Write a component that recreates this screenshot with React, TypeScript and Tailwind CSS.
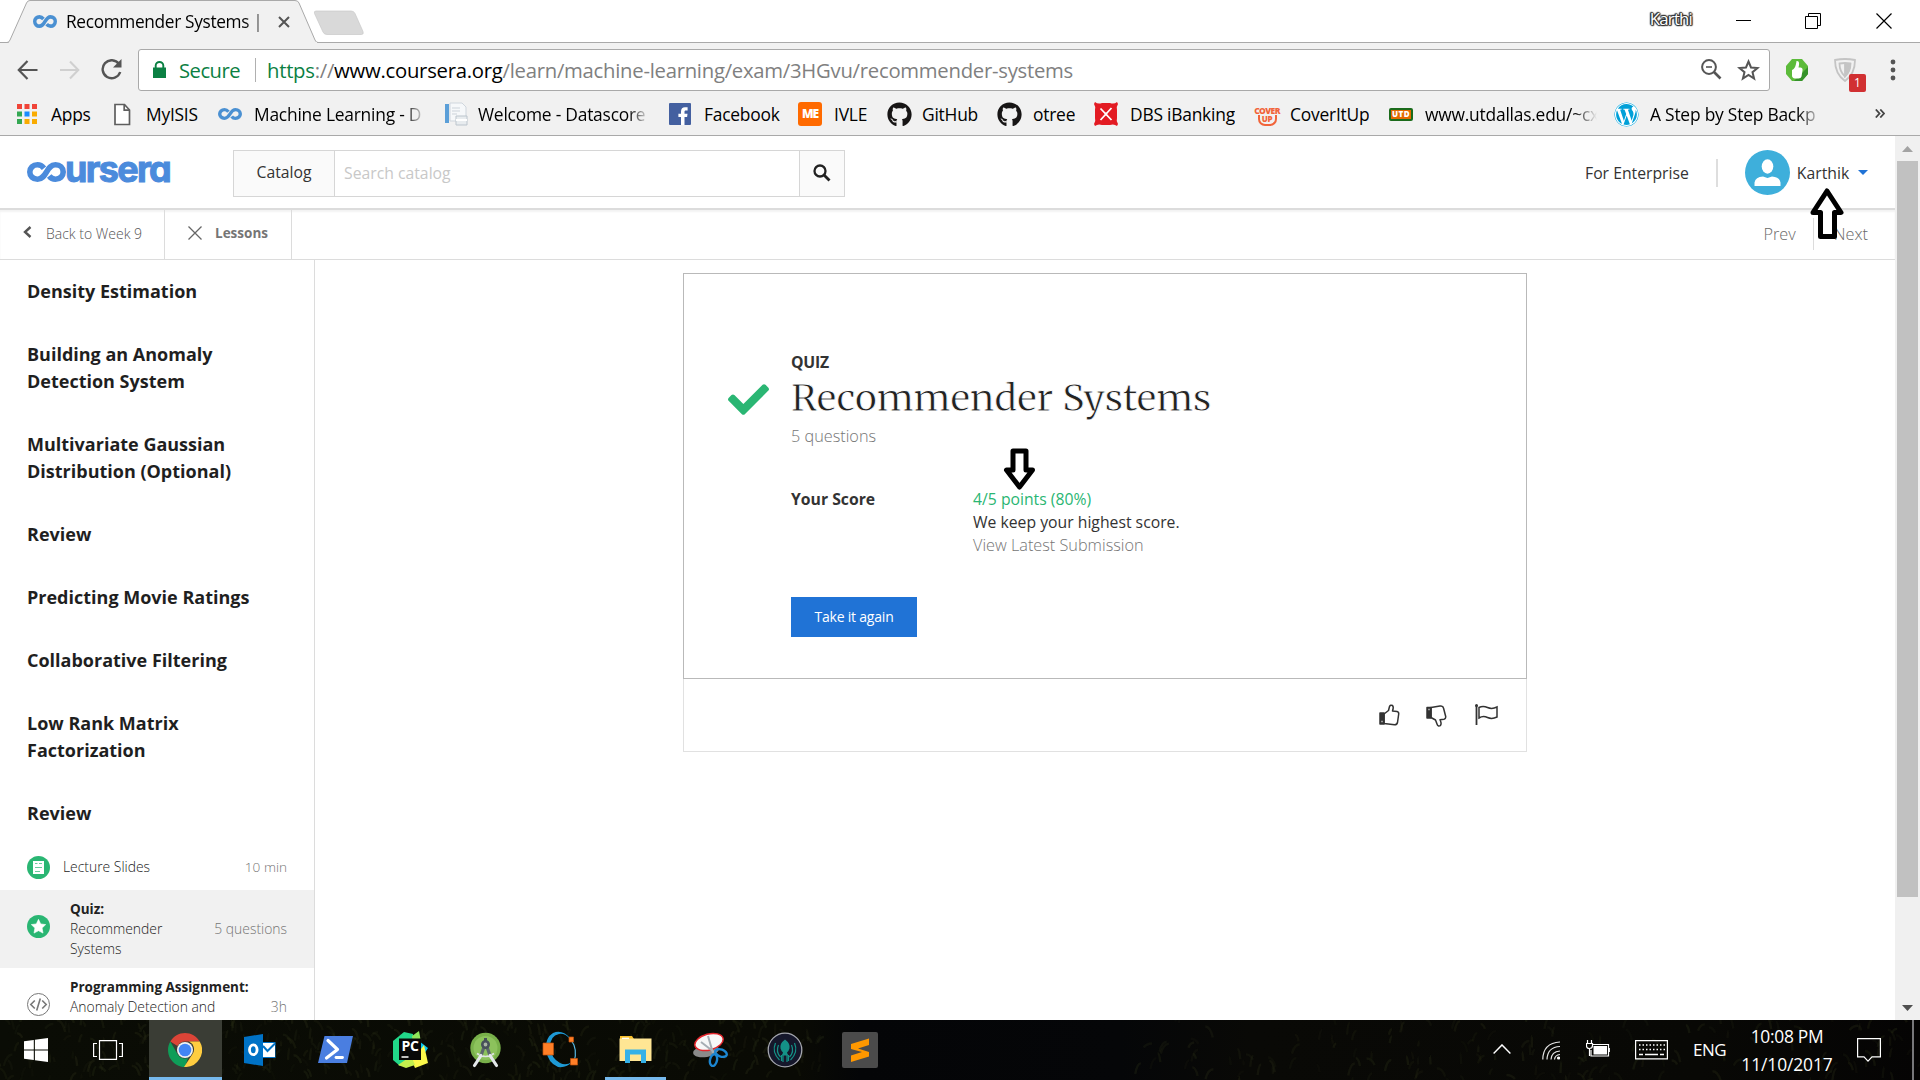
import type { ReactNode } from "react";
import { FaCheck, FaGithub, FaWordpress } from "react-icons/fa";

/* ---------- shared drawings ---------- */

function Infinity({ className, color }: { className: string; color: string }) {
  return (
    <svg className={className} viewBox="0 0 39 20" preserveAspectRatio="none" fill="none" stroke={color} strokeWidth="5.6">
      <path d="M17 6.2C15 3.8 12.8 2.8 10.5 2.8C6 2.8 2.8 6 2.8 10S6 17.2 10.5 17.2C20 17.2 19 2.8 28.5 2.8C33 2.8 36.2 6 36.2 10S33 17.2 28.5 17.2C26 17.2 24 16.4 22.2 14" />
    </svg>
  );
}

function AppsIcon() {
  const colors = ["#f04438", "#f04438", "#f04438", "#34a853", "#1a8cff", "#f9ab00", "#34a853", "#f9ab00", "#f9ab00"];
  return (
    <svg width="21" height="21" viewBox="0 0 21 21">
      {colors.map((c, i) => (
        <rect key={i} x={(i % 3) * 7.5} y={Math.floor(i / 3) * 7.5} width="5" height="5" fill={c} />
      ))}
    </svg>
  );
}

function PageIcon() {
  return (
    <svg width="17" height="23" viewBox="0 0 17 23" fill="#fff" stroke="#5f5f5f" strokeWidth="1.7">
      <path d="M1 1.5h9.5l5 5.5v14.5H1z" />
      <path d="M10.2 1.5v5.7h5.3" fill="none" />
    </svg>
  );
}

function DocsIcon() {
  return (
    <svg width="24" height="24" viewBox="0 0 24 24">
      <path d="M1 2h4v19H1z" fill="#5b9fd8" />
      <path d="M6 1h12l4 4v14H6z" fill="#f6f8fa" stroke="#cfd6dd" />
      <path d="M8 6h8M8 9h8M8 12h5" stroke="#ccd3da" />
      <path d="M12 14h11v9H12z" fill="#e8ecef" stroke="#bcc5cd" />
      <path d="M12 18h11" stroke="#fff" strokeWidth="2" />
    </svg>
  );
}

function FacebookIcon() {
  return (
    <svg width="22" height="22" viewBox="0 0 22 22">
      <rect width="22" height="22" rx="1" fill="#4460a0" />
      <path d="M12 22v-8H9.4v-3.2H12V8.5c0-2.8 1.5-4.3 4-4.3h2.6v3.2h-1.7c-1.1 0-1.4.5-1.4 1.500v1.900h3l-.4 3.200h-2.600v8z" fill="#fff" />
    </svg>
  );
}

function MeIcon() {
  return (
    <span className="flex h-6 w-6 items-center justify-center rounded-[3px] bg-[#ff6a00] text-[12px] font-extrabold tracking-[-1px] text-white">ME</span>
  );
}

function DbsIcon() {
  return (
    <svg width="24" height="24" viewBox="0 0 24 24">
      <path d="M1 0Q4 2.500 8 1h8q4 1.500 7-1l1 2q-2 3-1 6v8q-1 3 1 6l-1 2q-3-2.500-7-1H8q-4-1.500-7 1l-1-2q2-3 1-6V8Q2 5 0 2z" fill="#e31b23" />
      <path d="M6.500 6.500 17.500 18M17.500 6 6.500 18" stroke="#fff" strokeWidth="1.800" />
      <path d="m10.500 12 1.500-2 1.500 2-1.500 2z" fill="#fff" />
    </svg>
  );
}

function CoverIcon() {
  return (
    <span className="flex h-6 w-6 flex-col items-center justify-end text-[#f1643a]">
      <span className="text-[8.500px] leading-[9px] font-black tracking-[-0.600px]">COVER</span>
      <span className="flex h-[11px] w-[19px] items-start justify-center rounded-b-[7px] border-2 border-t-0 border-[#f1643a] text-[8px] leading-[8px] font-black tracking-[-0.300px]">UP</span>
    </span>
  );
}

function UtdIcon() {
  return (
    <span className="flex h-[13px] w-6 items-center justify-center rounded-[2px] border-2 border-[#1b6b1b] bg-[#e36a00] text-[8px] leading-none font-extrabold tracking-[0.500px] text-white">UTD</span>
  );
}

/* ---------- browser chrome ---------- */

function WindowBar() {
  return (
    <div className="relative flex h-[43px] items-start border-b border-[#a9a9a9] bg-white">
      <svg className="absolute top-0 left-0" width="380" height="43" viewBox="0 0 380 43">
        <path d="M0 42.500H7Q9 42.500 10 40L26.500 3Q27.500.5 30 .5H295Q298 .5 299 3L315 40Q316 42.500 318 42.500" fill="#f1f1f1" stroke="#a9a9a9" />
        <path d="M9 43h308" stroke="#f1f1f1" strokeWidth="2" />
        <path d="M316 11h35q3 0 4 2.500l8 18q1 3-1.500 3H327q-3 0-4-2.500l-8.500-18.500q-.8-2.500 1.500-2.500z" fill="#d9d9d9" stroke="#c9c9c9" strokeWidth=".7" />
      </svg>
      <div className="relative flex h-[43px] w-[318px] items-center pl-[33px]">
        <Infinity className="h-[13px] w-6" color="#4a90d2" />
        <span className="ml-[9px] w-[201px] overflow-hidden text-[17.300px] tracking-[-0.340px] whitespace-nowrap text-black [mask-image:linear-gradient(to_right,#000_88%,#0007)]">Recommender Systems |</span>
        <svg className="ml-[11px]" width="12" height="12" viewBox="0 0 12 12" stroke="#555" strokeWidth="2"><path d="m1 1 10 10M11 1 1 11" /></svg>
      </div>
      <div className="ml-auto flex h-[41px] items-center pr-[28px]">
        <span className="mr-[44px] mb-[3px] text-[16.800px] leading-none tracking-[-0.800px] text-white [text-shadow:0_0_1px_#333,0_0_2px_#333,1px_0_1px_#333,-1px_0_1px_#333,0_1px_1px_#333,0_-1px_1px_#333,1px_1px_1px_#444,-1px_-1px_1px_#444]">Karthi</span>
        <svg className="mr-[54px]" width="15" height="16" viewBox="0 0 15 16"><path d="M0 7.500h15" stroke="#000" /></svg>
        <svg className="mr-[55px]" width="16" height="16" viewBox="0 0 16 16" fill="none" stroke="#000"><path d="M.5 3.500h12v12H.5zM3.500 3.500V.5h12v12h-3" /></svg>
        <svg width="16" height="16" viewBox="0 0 16 16" stroke="#000" strokeWidth="1.200"><path d="m.5.5 15 15M15.500.5l-15 15" /></svg>
      </div>
    </div>
  );
}

function Toolbar() {
  return (
    <div className="flex h-[53px] items-center pl-[17px]">
      <svg width="21" height="20" viewBox="0 0 21 20" fill="none" stroke="#555" strokeWidth="2.200"><path d="M20.500 10H2M10.500 1 1.800 10l8.700 9" /></svg>
      <svg className="ml-[22px]" width="20" height="20" viewBox="0 0 21 20" fill="none" stroke="#d0d0d0" strokeWidth="2.200"><path d="M0 10h19M10.500 1l8.700 9-8.700 9" /></svg>
      <svg className="ml-[21px]" width="21" height="21" viewBox="0 0 21 21" fill="none" stroke="#555" strokeWidth="2.400"><path d="M18 5A9 9 0 1 0 19.200 13" /><path d="M20.500 0v8.500H12z" fill="#555" stroke="none" /></svg>
      <div className="ml-4 flex h-[42px] w-[1632px] items-center rounded-[3px] border border-[#a9a9a9] bg-white pr-[9px] pl-[14px]">
        <svg width="13" height="17" viewBox="0 0 13 17"><path d="M0 6.500h13V17H0z" fill="#0b8043" /><path d="M2.700 7V4.500a3.800 3.500 0 0 1 7.600 0V7" fill="none" stroke="#0b8043" strokeWidth="1.900" /></svg>
        <span className="mt-px ml-[13px] w-[62px] text-[20.200px] tracking-[-0.500px] text-[#0b8043]">Secure</span>
        <span className="ml-[14px] h-6 w-px bg-[#b0b0b0]" />
        <span className="mt-px ml-[11px] text-[20.300px] tracking-[-0.260px] whitespace-nowrap text-[#808080]">
          <span className="text-[#0b8043]">https</span>://<span className="text-black">www.coursera.org</span>/learn/machine-learning/exam/3HGvu/recommender-systems
        </span>
        <svg className="ml-auto" width="21" height="21" viewBox="0 0 21 21" fill="none" stroke="#555"><circle cx="8" cy="8" r="6.900" strokeWidth="2" /><path d="M5 8h6" strokeWidth="1.600" /><path d="m13 13 6.500 6.500" strokeWidth="2.600" /></svg>
        <svg className="ml-[15px]" width="23" height="22" viewBox="0 0 23 22" fill="none" stroke="#555" strokeWidth="2"><path d="m11.500 2.500 2.500 6 6.500.5-5 4.200 1.600 6.300-5.600-3.500-5.600 3.500 1.600-6.300-5-4.200 6.500-.5z" /></svg>
      </div>
      <svg className="ml-[15px]" width="24" height="24" viewBox="0 0 24 24"><path d="M7 1h10l6 7v8l-6 7H7l-6-7V8z" fill="#5cbb3a" /><path d="m23 9v7l-6 7H9z" fill="#35922a" /><path d="M7 12c3-1 4-5 4.500-9 3-.5 3 3 2 6.500 3 0 4.500.5 4 3l-1 6q-.5 2-3 2H10q-3-.5-3-3z" fill="#fff" /></svg>
      <div className="relative ml-[25px] h-6 w-[24px]">
        <svg width="22" height="24" viewBox="0 0 22 24" fill="none" stroke="#c4c4c4" strokeWidth="1.800"><path d="M1 2q10-2 20 0 0 14-10 21Q1 16 1 2z" /><path d="M5.500 5.500q5.500-1 11 0 0 8-5.500 13-5.500-5-5.500-13z" /><path d="M11 6v12q5-5 5-12z" fill="#c4c4c4" /></svg>
        <span className="absolute top-[16px] left-[15px] flex h-[18px] w-[17px] items-center justify-center rounded-[2px] bg-[#d13032] pt-px text-[12px] text-white">1</span>
      </div>
      <svg className="ml-[32px]" width="6" height="22" viewBox="0 0 6 22" fill="#555"><circle cx="3" cy="3" r="2.400" /><circle cx="3" cy="11" r="2.400" /><circle cx="3" cy="19" r="2.400" /></svg>
    </div>
  );
}

const bookmarks: { cell: string; slot: string; label: string; text: string; icon: ReactNode }[] = [
  { cell: "w-[97px]", slot: "w-[34px]", label: "", text: "Apps", icon: <AppsIcon /> },
  { cell: "w-[105px]", slot: "w-[32px]", label: "", text: "MyISIS", icon: <PageIcon /> },
  { cell: "w-[225px]", slot: "w-[35px]", label: "w-[171px] [mask-image:linear-gradient(to_right,#000_88%,#0000)]", text: "Machine Learning - D", icon: <Infinity className="-ml-px h-[12px] w-6" color="#4a90d2" /> },
  { cell: "w-[225px]", slot: "w-[34px]", label: "w-[171px] [mask-image:linear-gradient(to_right,#000_88%,#0000)]", text: "Welcome - Datascore", icon: <DocsIcon /> },
  { cell: "w-[129px]", slot: "w-[35px]", label: "", text: "Facebook", icon: <FacebookIcon /> },
  { cell: "w-[89px]", slot: "w-[36px]", label: "", text: "IVLE", icon: <MeIcon /> },
  { cell: "w-[110px]", slot: "w-[35px]", label: "", text: "GitHub", icon: <FaGithub size={25} color="#171515" /> },
  { cell: "w-[97px]", slot: "w-[36px]", label: "", text: "otree", icon: <FaGithub size={25} color="#171515" /> },
  { cell: "w-[161px]", slot: "w-[36px]", label: "", text: "DBS iBanking", icon: <DbsIcon /> },
  { cell: "w-[134px]", slot: "w-[35px]", label: "", text: "CoverItUp", icon: <CoverIcon /> },
  { cell: "w-[225px]", slot: "w-[36px]", label: "w-[172px] [mask-image:linear-gradient(to_right,#000_86%,#0000)]", text: "www.utdallas.edu/~cx", icon: <UtdIcon /> },
  { cell: "w-[261px]", slot: "w-[36px]", label: "w-[172px] [mask-image:linear-gradient(to_right,#000_86%,#0000)]", text: "A Step by Step Backp", icon: <FaWordpress size={25} color="#00a0d8" className="rounded-full bg-white" /> },
];

function Bookmarks() {
  return (
    <div className="flex h-[40px] items-start border-b border-[#a9a9a9] pl-[17px]">
      {bookmarks.map((b, i) => (
        <div key={i} className={"flex h-[36px] shrink-0 items-center " + b.cell}>
          <span className={"flex shrink-0 " + b.slot}>{b.icon}</span>
          <span className={"overflow-hidden text-[17.400px] tracking-[-0.220px] whitespace-nowrap text-black " + b.label}>{b.text}</span>
        </div>
      ))}
      <svg className="mt-[13px]" width="10" height="9" viewBox="0 0 10 9" fill="none" stroke="#444" strokeWidth="1.800"><path d="m.8.5 3.700 4-3.700 4M5.300.5 9 4.500l-3.700 4" /></svg>
    </div>
  );
}

/* ---------- page ---------- */

function SiteHeader() {
  return (
    <header className="flex h-[74px] shrink-0 items-center border-b-2 border-[#dcdcdc] bg-white pl-[27px] text-[15.750px] text-[#333]">
      <div className="mt-[-1px] flex w-[206px] items-center">
        <Infinity className="h-[20px] w-[39px] shrink-0" color="#4b8bdc" />
        <span className="mt-[-6px] -ml-px font-['Inter'] text-[36px] leading-[20px] font-bold tracking-[-1.700px] text-[#4b8bdc] [-webkit-text-stroke:1px_#4b8bdc] [font-feature-settings:'cv11']">ursera</span>
      </div>
      <div className="mt-[2px] flex h-[47px] w-[612px] border border-[#d6d6d6]">
        <span className="flex w-[101px] items-center justify-center border-r border-[#d6d6d6] bg-[#fafafa]">Catalog</span>
        <span className="flex flex-1 items-center pt-[2px] pl-[9px] text-[#c8c8c8]">Search catalog</span>
        <span className="flex w-[45px] items-center justify-center border-l border-[#d6d6d6] bg-[#fafafa]">
          <svg width="18" height="18" viewBox="0 0 18 18" fill="none" stroke="#222"><circle cx="7" cy="7" r="5.500" strokeWidth="2.300" /><path d="m11 11 5.500 5.500" strokeWidth="2.800" /></svg>
        </span>
      </div>
      <span className="mt-[3px] ml-[740px]">For Enterprise</span>
      <span className="mt-px ml-[27px] h-7 w-[2px] bg-[#dedede]" />
      <svg className="ml-[27px]" width="45" height="45" viewBox="0 0 45 45">
        <circle cx="22.500" cy="22.500" r="22.500" fill="#3eafdb" />
        <ellipse cx="22.500" cy="16.500" rx="5.800" ry="7.200" fill="#fff" />
        <path d="M9.500 36v-3.500Q10.500 27 18 26.500l4.500 1.500 4.500-1.500q7.500.5 8.500 6V36z" fill="#fff" />
      </svg>
      <span className="mt-[3px] ml-[7px]">Karthik</span>
      <svg className="ml-[9px]" width="10" height="5" viewBox="0 0 10 5"><path d="M0 0h10L5 5z" fill="#2073d6" /></svg>
    </header>
  );
}

function CourseNav() {
  return (
    <div className="flex h-[50px] shrink-0 border-b border-[#dcdcdc] bg-white text-[#757575] shadow-[inset_0_2px_2px_#0000000d]">
      <div className="flex w-[165px] items-center border-r border-[#dcdcdc] pb-[3px] pl-[23px]">
        <svg className="mb-[3px]" width="9" height="12" viewBox="0 0 9 12" fill="none" stroke="#555" strokeWidth="2.400"><path d="M7.500 1 2 6l5.500 5" /></svg>
        <span className="ml-[14px] text-[14px] font-light text-[#555]">Back to Week 9</span>
      </div>
      <div className="flex w-[127px] items-center border-r border-[#dcdcdc] pb-[3px] pl-[23px] text-[13.500px]">
        <svg width="14" height="14" viewBox="0 0 14 14" stroke="#666" strokeWidth="1.300"><path d="m.5.5 13 13M13.500.5l-13 13" /></svg>
        <span className="mt-px ml-[13px] font-bold">Lessons</span>
      </div>
      <div className="ml-auto flex items-center pr-[27px] text-[16.300px] font-light text-[#6a6a6a]">
        <span>Prev</span>
        <span className="mb-px ml-[17px] h-8 w-px bg-[#dcdcdc]" />
        <span className="ml-[20px]">Next</span>
      </div>
    </div>
  );
}

const lessons = [
  ["Density Estimation"],
  ["Building an Anomaly", "Detection System"],
  ["Multivariate Gaussian", "Distribution (Optional)"],
  ["Review"],
  ["Predicting Movie Ratings"],
  ["Collaborative Filtering"],
  ["Low Rank Matrix", "Factorization"],
  ["Review"],
];

function Sidebar() {
  return (
    <aside className="flex w-[315px] shrink-0 flex-col overflow-hidden border-r border-[#dcdcdc] text-[13.900px] leading-[20px] font-light text-[#222]">
      {lessons.map((lines, i) => (
        <h3 key={i} className="shrink-0 py-[18px] pl-[27px] text-[18px] leading-[27px] font-bold text-[#1f1f1f]">
          {lines.map((l) => <span key={l} className="block">{l}</span>)}
        </h3>
      ))}
      <div className="flex h-[45px] shrink-0 items-center pr-[27px] pl-[27px]">
        <svg width="23" height="23" viewBox="0 0 23 23">
          <circle cx="11.500" cy="11.500" r="11.500" fill="#2ab673" />
          <path d="M6 5h11v13H6z" fill="#fff" />
          <path d="M8 7.500h2.500M12 7.500h3M8 11.500h7M8 15.500h5" stroke="#2ab673" strokeWidth="1.200" opacity=".7" />
        </svg>
        <span className="mb-[2px] ml-[13px]">Lecture Slides</span>
        <span className="mb-[2px] ml-auto text-[13.600px] text-[#757575]">10 min</span>
      </div>
      <div className="flex h-[78px] shrink-0 items-center bg-[#f1f1f1] pr-[27px] pl-[27px]">
        <svg className="mb-[6px]" width="23" height="23" viewBox="0 0 23 23">
          <circle cx="11.500" cy="11.500" r="11.500" fill="#2ab673" />
          <path d="m11.500 4.300 2.200 4.600 5 .7-3.600 3.500.9 5-4.500-2.400L7 18.100l.9-5-3.600-3.500 5-.7z" fill="#fff" stroke="#fff" strokeWidth=".6" strokeLinejoin="round" />
        </svg>
        <span className="ml-5 flex flex-col"><b className="text-[13.500px] font-bold">Quiz:</b><span>Recommender</span><span>Systems</span></span>
        <span className="ml-auto text-[#757575]">5 questions</span>
      </div>
      <div className="flex h-[78px] shrink-0 items-center pr-[27px] pl-[27px]">
        <svg className="mb-[6px] shrink-0" width="23" height="23" viewBox="0 0 23 23" fill="none" stroke="#777">
          <circle cx="11.500" cy="11.500" r="11" fill="#fff" />
          <path d="m7.800 7.500-4 4 4 4M15.200 7.500l4 4-4 4M13.300 5.500l-3.600 12" strokeWidth="1.600" />
        </svg>
        <span className="ml-5 flex h-[60px] w-[147px] flex-col whitespace-nowrap"><b className="text-[13.500px] font-bold">Programming Assignment:</b><span>Anomaly Detection and</span></span>
        <span className="ml-auto text-[#757575]">3h</span>
      </div>
    </aside>
  );
}

function QuizCard() {
  return (
    <section className="mt-[13px] ml-[368px] w-[844px]">
      <div className="relative flex h-[406px] border border-[#b9b9b9] pt-[76px] text-[15.750px] text-[#333]">
        <div className="w-[107px] pt-[29px] pl-[44px]"><FaCheck size={41} color="#2ab673" /></div>
        <div className="flex flex-col">
          <span className="h-6 leading-6 font-bold tracking-[-0.200px]">QUIZ</span>
          <h1 className="mt-[-2px] mb-[2px] h-[52px] font-['Merriweather','Noto_Serif','DejaVu_Serif_Condensed',serif] text-[37.200px] leading-[52px] font-normal whitespace-nowrap text-[#222] [-webkit-text-stroke:0.800px_#fff]">Recommender Systems</h1>
          <span className="mt-[-1px] text-[16.250px] leading-[23px] font-light text-[#757575]">5 questions</span>
          <div className="mt-[40px] flex leading-[23px]">
            <b className="w-[182px]">Your Score</b>
            <span className="flex flex-col">
              <span className="text-[#2ab673]">4/5 points (80%)</span>
              <span>We keep your highest score.</span>
              <span className="text-[16.250px] font-light text-[#757575]">View Latest Submission</span>
            </span>
          </div>
          <button className="mt-[40px] h-[40px] w-[126px] bg-[#2073d6] pb-[2px] text-[14px] tracking-[-0.210px] text-white">Take it again</button>
        </div>
        <svg className="absolute top-[174px] left-[319px]" width="33" height="43" viewBox="0 0 33 43"><path d="M10 3h13v19h6.500L16.500 39 3.500 22H10z" fill="#fff" stroke="#000" strokeWidth="5" strokeLinejoin="round" /></svg>
      </div>
      <div className="flex h-[73px] items-center justify-end border border-t-0 border-[#e1e1e1] pr-[28px]">
        <svg className="mb-px" width="21" height="22" viewBox="0 0 21 22" fill="none" stroke="#333" strokeWidth="1.500" strokeLinejoin="round">
          <path d="M1 9h4v11H1z" fill="#333" /><path d="M5 10 9.500 6.500 10.500 2.500Q11.500.5 13.500 1.500 15 3 13.500 7L18 7.500Q20 8 19.700 10L18.500 18.500Q18 20.800 15.500 20.800L5 19.500z" /><path d="M2.500 17.500h1" stroke="#fff" />
        </svg>
        <svg className="mt-px ml-[26px]" width="21" height="22" viewBox="0 0 21 22" fill="none" stroke="#333" strokeWidth="1.500" strokeLinejoin="round">
          <path d="M1 2.500h4v10.500H1z" fill="#333" /><path d="M5 2.500 14 1Q17 .8 17.500 3L19.700 11.500Q20 13.800 18 14.300L14 14.700Q16 19 14.300 20.600 12 21.800 11 19L9.500 15 5 12.500z" /><path d="M2.500 4.500h1" stroke="#fff" />
        </svg>
        <svg className="mb-px ml-[28px]" width="23" height="21" viewBox="0 0 23 21" fill="none" stroke="#333" strokeWidth="1.500">
          <path d="M1.500 1v20" strokeWidth="1.800" /><circle cx="1.500" cy="1.500" r="1.500" fill="#333" stroke="none" /><path d="M4 3.500Q8 1.500 12.500 3.500T22 3V13Q17 15.500 12.500 13.500T4 14z" />
        </svg>
      </div>
    </section>
  );
}

function Scrollbar() {
  return (
    <div className="flex w-[25px] shrink-0 flex-col items-center bg-[#f0f0f0]">
      <svg className="mt-[10px]" width="11" height="6" viewBox="0 0 11 6"><path d="M0 6h11L5.500 0z" fill="#a3a3a3" /></svg>
      <div className="mt-[9px] h-[736px] w-[21px] bg-[#c1c1c1]" />
      <svg className="mt-auto mb-[9px]" width="11" height="6" viewBox="0 0 11 6"><path d="M0 0h11L5.500 6z" fill="#505050" /></svg>
    </div>
  );
}

/* ---------- taskbar ---------- */

function Chrome() {
  return (
    <svg width="34" height="34" viewBox="0 0 34 34">
      <path d="M2.300 8.500A17 17 0 0 1 31.700 8.500H17A8.500 8.500 0 0 0 9.500 13z" fill="#db4437" />
      <path d="M2.300 8.500 9.600 21.200A8.500 8.500 0 0 0 20 25L17 34A17 17 0 0 1 2.300 8.500z" fill="#0f9d58" />
      <path d="M31.700 8.500A17 17 0 0 1 16 34l8.400-12.800A8.500 8.500 0 0 0 21 8.500z" fill="#ffcd40" />
      <circle cx="17" cy="17" r="8" fill="#f1f1f1" /><circle cx="17" cy="17" r="6.300" fill="#4285f4" />
    </svg>
  );
}

function Outlook() {
  return (
    <svg width="32" height="32" viewBox="0 0 32 32">
      <path d="M18 8h13.500v16H18z" fill="#0072c6" /><path d="M19 9h12v14H19z" fill="#fff" /><path d="m19 12 4.500 5L31 9.500" fill="none" stroke="#0072c6" strokeWidth="2" />
      <path d="M0 3 19 0v32L0 29z" fill="#0072c6" /><ellipse cx="9.300" cy="15.800" rx="3.800" ry="4.900" fill="none" stroke="#fff" strokeWidth="2.800" />
    </svg>
  );
}

function PowerShell() {
  return (
    <svg width="35" height="27" viewBox="0 0 35 27"><path d="M6.500 0H35l-6 27H0z" fill="#4a7ee0" /><path d="m10 4.500 9.500 9L8.500 22" fill="none" stroke="#fff" strokeWidth="3.200" strokeLinecap="round" strokeLinejoin="round" /><path d="M18 21.500h6.500" stroke="#fff" strokeWidth="2.800" strokeLinecap="round" /></svg>
  );
}

function PyCharm() {
  return (
    <span className="relative flex h-[37px] w-[37px] items-center justify-center">
      <svg className="absolute inset-0" width="37" height="37" viewBox="0 0 37 37">
        <path d="M1 10 12 1l9 2v20L8 35 1 29z" fill="#21d789" /><path d="m20 5 7-5 2 11-8 4z" fill="#8ee65a" /><path d="m27 10 9 7-6 9z" fill="#07c3f2" />
        <path d="m20 30 12-16 4 18-13 5z" fill="#fcf84a" /><path d="m6 34 13-9 4 9-9 3z" fill="#c4f04d" /><path d="M7 7.500h22V29H7z" fill="#080808" /><path d="M9.500 26h7" stroke="#fff" strokeWidth="1.500" />
      </svg>
      <span className="relative mb-[7px] text-[14px] leading-none font-bold tracking-[-0.300px] text-white">PC</span>
    </span>
  );
}

function AndroidStudio() {
  return (
    <svg width="31" height="36" viewBox="0 0 31 36">
      <circle cx="15.500" cy="16" r="15.200" fill="#78b04a" /><circle cx="15.500" cy="16" r="12" fill="#8cc25c" />
      <path d="M7 21.500q8.500 6 17 0" fill="none" stroke="#dfe5e1" strokeWidth="1.600" />
      <path d="M14 15 11 23.500M17 15l3 8.500" stroke="#5c666c" strokeWidth="3.200" />
      <path d="m11 23.500-6.500 10M20 23.500l6.500 10" stroke="#e4e8ea" strokeWidth="3.200" strokeLinecap="round" />
      <path d="M15.500 6v4" stroke="#475159" strokeWidth="3" /><circle cx="15.500" cy="12.500" r="3.200" fill="#a9b3a4" stroke="#475159" strokeWidth="2.600" />
    </svg>
  );
}

function Octave() {
  return (
    <svg width="37" height="37" viewBox="0 0 37 37"><path d="M28 7Q20-2 11 2 3 7 4 19q2 13 12 17 9 1 14-5-6 4-12 1-9-5-10-16Q8 5 17 3q6-1 11 5z" fill="#1e9ad6" /><path d="M29 9q7 9 3 22" fill="none" stroke="#57b9e6" strokeWidth="1.200" /><path d="M1 12h10.500v12H1zM27 6h4.500v5H27zM28.500 27.500h7V34h-7z" fill="#ff7f27" stroke="#c2500c" strokeWidth=".7" /></svg>
  );
}

function Explorer() {
  return (
    <svg width="33" height="27" viewBox="0 0 33 27"><path d="M1 0h12l2 3H1z" fill="#f8c02c" /><path d="M.5 2.500h32V25H.5z" fill="#ffe694" /><path d="M3 2.300h7" stroke="#fff" strokeWidth="1.300" /><path d="M6 27V13.500h21V27h-5v-8.500H11V27z" fill="#35b1e8" /></svg>
  );
}

function Snip() {
  return (
    <svg width="35" height="35" viewBox="0 0 35 35"><ellipse cx="13" cy="19" rx="13" ry="6" fill="#8a8a8a" transform="rotate(-10 13 19)" /><ellipse cx="16" cy="10" rx="14.500" ry="8" fill="#f7f7f7" stroke="#e2252b" strokeWidth="1.500" transform="rotate(-15 16 10)" /><path d="m15 4 5 17M8 10l13 10" stroke="#a6adb3" strokeWidth="2" /><ellipse cx="28" cy="21" rx="6" ry="3.500" fill="none" stroke="#1c86d1" strokeWidth="2.400" transform="rotate(20 28 21)" /><ellipse cx="20.500" cy="28" rx="3.500" ry="6" fill="none" stroke="#1c86d1" strokeWidth="2.400" transform="rotate(12 20 28)" /></svg>
  );
}

function Kraken() {
  return (
    <svg width="36" height="36" viewBox="0 0 36 36" fill="none"><circle cx="18" cy="18" r="16.800" fill="#15172b" stroke="#a4a6ae" strokeWidth="1.300" /><path d="M18 7.500q5.500 4 4.500 9-1 3-2.500 4l1 3h-6l1-3q-1.500-1-2.500-4-1-5 4.500-9z" fill="#149287" /><path d="M16 22v8M20 22v8M14.500 23v6M21.500 23v6M8.500 11q-4 9 4 17M27.500 11q4 9-4 17M11.500 13q-3 7 2 12M24.500 13q3 7-2 12" stroke="#149287" strokeWidth="1.200" /></svg>
  );
}

function Sublime() {
  return (
    <svg width="36" height="36" viewBox="0 0 36 36"><rect width="36" height="36" rx="2" fill="#4b4b4b" /><path d="m9 12 18-5.500V13L16 16.500l11 3.500v4.500L9 30v-6.500l11-3.500L9 17z" fill="#ff9800" /></svg>
  );
}

const apps: { icon: ReactNode; tile: string; bar: string }[] = [
  { icon: <Chrome />, tile: "bg-[#3a3d35]", bar: "w-[73px] bg-[#76b9ed]" },
  { icon: <Outlook />, tile: "", bar: "" },
  { icon: <PowerShell />, tile: "", bar: "" },
  { icon: <PyCharm />, tile: "", bar: "" },
  { icon: <AndroidStudio />, tile: "", bar: "" },
  { icon: <Octave />, tile: "", bar: "" },
  { icon: <Explorer />, tile: "", bar: "w-[61px] bg-[#76b9ed]" },
  { icon: <Snip />, tile: "", bar: "" },
  { icon: <Kraken />, tile: "", bar: "" },
  { icon: <Sublime />, tile: "", bar: "" },
];

/* Faint blades of grass from the wallpaper that show through the bar. */
function Grass() {
  const blades = Array.from({ length: 560 }, (_, i) => {
    const r = (k: number) => {
      const v = Math.sin(i * 12.9898 + k * 78.233) * 43758.5453;
      return v - Math.floor(v);
    };
    const x = r(1) < 0.7 ? r(2) * 820 : 1130 + r(2) * 790;
    return { x, y: r(3) * 66, dx: r(4) * 18 - 9, dy: 4 + r(5) * 8, o: 0.1 + r(6) * 0.28 };
  });
  return (
    <svg className="absolute inset-0" width="1920" height="60" viewBox="0 0 1920 60">
      {blades.map((b, i) => (
        <path key={i} d={`M${b.x} ${b.y}q${b.dx / 3} ${-b.dy} ${b.dx} ${-b.dy}`} stroke="#2a2e17" strokeWidth="2.400" fill="none" opacity={b.o} />
      ))}
    </svg>
  );
}

function Taskbar() {
  return (
    <footer className="relative flex h-[60px] overflow-hidden bg-[linear-gradient(to_right,#0a0c05_0,#090a04_800px,#040507_860px,#050608_1120px,#090906_1250px,#080805_1700px,#050404_1920px)] text-white">
      <Grass />
      <div className="relative flex w-[72px] items-center justify-center">
        <svg width="24" height="24" viewBox="0 0 24 24" fill="#fff"><path d="M0 3.300 9.800 2v9.500H0zM10.900 1.800 24 0v11.500H10.900zM0 12.500h9.800V22L0 20.700zM10.900 12.500H24V24l-13.100-1.800z" /></svg>
      </div>
      <div className="relative flex w-[76px] items-center pl-[21px]">
        <svg width="30" height="20" viewBox="0 0 30 20" fill="none" stroke="#fff" strokeWidth="1.200"><path d="M6.500.6h17v18.800h-17zM4 3.500H.6v13H4M26 3.500h3.400v13H26" /></svg>
      </div>
      {apps.map((a, i) => (
        <div key={i} className="relative flex w-[75px] flex-col items-center pr-px">
          <div className={"flex h-[57px] w-[73px] items-center justify-center pt-[2px] " + a.tile}>{a.icon}</div>
          <div className={"h-[3px] " + a.bar} />
        </div>
      ))}
      <div className="relative ml-auto flex h-[60px] items-center text-[17.400px] leading-[28px]">
        <svg className="mr-[31px] mb-[2px]" width="18" height="10" viewBox="0 0 18 10" fill="none" stroke="#fff" strokeWidth="1.400"><path d="m.6 9.400 8.400-8.500 8.400 8.500" /></svg>
        <svg className="mr-[26px]" width="18" height="19" viewBox="0 0 18 19" fill="none" stroke="#e6e6e6" strokeWidth="1.200"><path d="M.8 18.500Q1 2 18 1M5 18.500Q5.500 6 18 5.500M9 18.500Q9.500 10.500 18 10M12.500 18.500q.5-4.500 5.500-5" /><circle cx="16.500" cy="17" r="1.600" fill="#fff" stroke="none" /></svg>
        <svg className="mr-[25px] mb-[3px]" width="24" height="17" viewBox="0 0 24 17" fill="none" stroke="#fff" strokeWidth="1.200"><path d="M6 4.500h16.500v11.500H5V10M23.300 8v4" /><path d="M7.500 6H21v8.500H7.500z" fill="#fff" stroke="none" /><path d="M1.500 0v3M5.500 0v3M.5 3.500h6v2q0 3-3 3t-3-3zM3.500 8.500V16" fill="#0a0a06" /></svg>
        <svg className="mr-[25px] mb-[1px]" width="33" height="20" viewBox="0 0 33 20" fill="none" stroke="#fff"><path d="M.6.6h31.800v18.300H.6z" strokeWidth="1.200" /><path d="M4 5h26M4 9.500h26" strokeWidth="1.500" strokeDasharray="1.500 2" /><path d="M4 14.500h4M10 14.500h13M25 14.500h4" strokeWidth="1.400" /></svg>
        <span className="w-[33px] text-[17px] tracking-[-0.500px]">ENG</span>
        <span className="ml-[15px] flex w-[92px] flex-col items-center tracking-[-0.100px]"><span className="tracking-[-0.300px]">10:08 PM</span><span>11/10/2017</span></span>
        <svg className="ml-[24px]" width="24" height="24" viewBox="0 0 24 24" fill="none" stroke="#fff" strokeWidth="1.200"><path d="M.6.6h22.800v18.300H15l-4 4.200-4-4.200H.6z" /></svg>
        <span className="mr-[6px] ml-[31px] h-[60px] w-[2px] bg-[#77777a]" />
      </div>
    </footer>
  );
}

export default function App() {
  return (
    <div className="flex h-[1080px] w-[1920px] flex-col overflow-hidden bg-[#f1f1f1] font-['Open_Sans','Noto_Sans',sans-serif]">
      <WindowBar />
      <Toolbar />
      <Bookmarks />
      <div className="flex min-h-0 flex-1 bg-white">
        <div className="relative flex min-w-0 flex-1 flex-col">
          <SiteHeader />
          <CourseNav />
          <div className="flex min-h-0 flex-1">
            <Sidebar />
            <main className="flex-1"><QuizCard /></main>
          </div>
          <svg className="absolute top-[51px] left-[1810px]" width="34" height="53" viewBox="0 0 34 53"><path d="M17 4 31 25.500h-6.500v24h-14v-24H3z" fill="#fff" stroke="#000" strokeWidth="5" strokeLinejoin="round" /></svg>
        </div>
        <Scrollbar />
      </div>
      <Taskbar />
    </div>
  );
}
